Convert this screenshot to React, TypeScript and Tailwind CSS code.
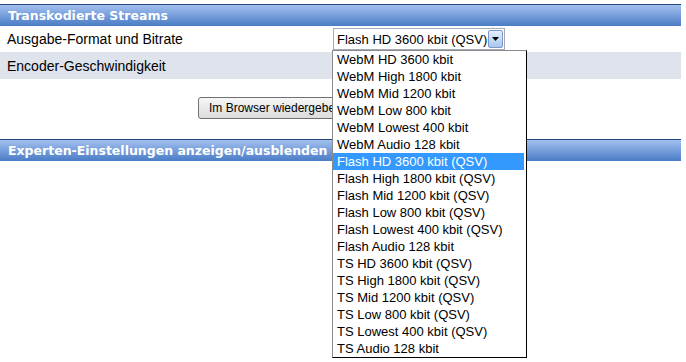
import React from "react";

const options = [
  "WebM HD 3600 kbit",
  "WebM High 1800 kbit",
  "WebM Mid 1200 kbit",
  "WebM Low 800 kbit",
  "WebM Lowest 400 kbit",
  "WebM Audio 128 kbit",
  "Flash HD 3600 kbit (QSV)",
  "Flash High 1800 kbit (QSV)",
  "Flash Mid 1200 kbit (QSV)",
  "Flash Low 800 kbit (QSV)",
  "Flash Lowest 400 kbit (QSV)",
  "Flash Audio 128 kbit",
  "TS HD 3600 kbit (QSV)",
  "TS High 1800 kbit (QSV)",
  "TS Mid 1200 kbit (QSV)",
  "TS Low 800 kbit (QSV)",
  "TS Lowest 400 kbit (QSV)",
  "TS Audio 128 kbit",
];

function Header({ children }: { children: React.ReactNode }) {
  return (
    <div
      className="h-[22px] border-t border-[#23467e] bg-gradient-to-b from-[#a3c0ee] to-[#4a7cc6] pl-[8px] text-[12.5px] font-bold leading-[21px] text-white"
      style={{ fontFamily: '"DejaVu Sans", Verdana, sans-serif' }}
    >
      {children}
    </div>
  );
}

export default function App() {
  const selected = 6;
  return (
    <div
      className="relative h-[362px] w-[686px] overflow-hidden bg-white pt-[4px] text-black"
      style={{ fontFamily: '"Liberation Sans", Arial, sans-serif' }}
    >
      <div className="w-[681px]">
        <Header>Transkodierte Streams</Header>
        <div className="flex h-[26px] items-center">
          <div className="w-[333px] pl-[7px] text-[14px] leading-[16px]">
            Ausgabe-Format und Bitrate
          </div>
          <div className="relative flex h-[22px] w-[172px] items-center border border-[#a5acb5] bg-white">
            <span className="pl-[3px] text-[13px] leading-[15px]">Flash HD 3600 kbit (QSV)</span>
            <div className="absolute right-[1px] top-[1px] flex h-[18px] w-[15px] items-center justify-center rounded-[2px] border border-[#7d99c4] bg-gradient-to-b from-[#e4effc] to-[#a9c6ee]">
              <svg width="7" height="4" viewBox="0 0 7 4">
                <path d="M0 0 L7 0 L3.5 4 Z" fill="#000" />
              </svg>
            </div>
          </div>
        </div>
        <div className="flex h-[27px] items-center bg-[#dfe3ec]">
          <div className="pl-[7px] text-[14px] leading-[16px]">Encoder-Geschwindigkeit</div>
        </div>
        <div className="mt-[18px] flex h-[21px] pl-[198px]">
          <button className="h-[22px] whitespace-nowrap rounded-[3px] border border-[#707070] bg-gradient-to-b from-[#f6f6f6] to-[#dcdcdc] px-[10px] text-[12px] leading-[14px]">
            Im Browser wiedergeben
          </button>
        </div>
        <div className="mt-[21px]">
          <Header>Experten-Einstellungen anzeigen/ausblenden</Header>
        </div>
      </div>

      <div className="absolute left-[332px] top-[50px] w-[195px] border border-black border-l-[#8a8a8a] border-t-[#8a8a8a] bg-white py-[0px] pr-[2px]">
        {options.map((o, i) => (
          <div
            key={o}
            className={
              "h-[17px] whitespace-nowrap pl-[4px] text-[13px] leading-[17px] " +
              (i === selected ? "bg-[#3399ff] text-white" : "text-black")
            }
          >
            {o}
          </div>
        ))}
      </div>
    </div>
  );
}
